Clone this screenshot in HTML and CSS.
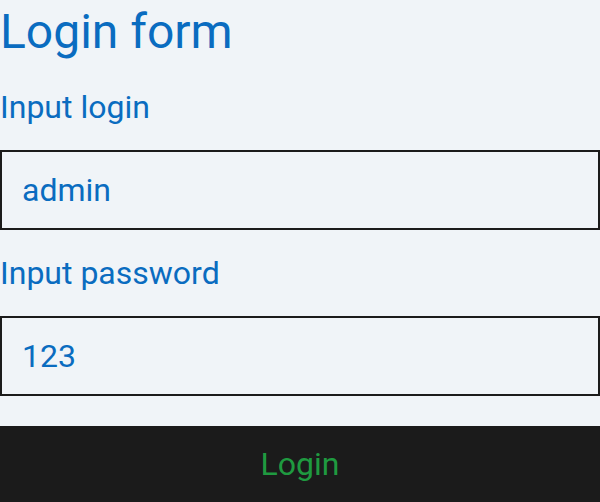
FILE: index.html
```html
<!DOCTYPE html>
<html>
<head>
<meta charset="utf-8">
<link rel="stylesheet" href="styles.css">
</head>
<body>
<form class="login">
  <h1 class="title">Login form</h1>
  <label class="label" for="login">Input login</label>
  <input class="field" id="login" type="text" value="admin">
  <label class="label" for="pass">Input password</label>
  <input class="field" id="pass" type="text" value="123">
  <button class="btn" type="button">Login</button>
</form>
</body>
</html>
```
FILE: styles.css
```css
html, body {
  margin: 0;
  padding: 0;
  background: #f0f4f8;
  font-family: Roboto, "Liberation Sans", sans-serif;
}
.login {
  display: flex;
  flex-direction: column;
  width: 600px;
}
.title {
  margin: 0;
  font-size: 48px;
  font-weight: 400;
  line-height: 64px;
  color: #0a6cc0;
}
.label {
  margin-top: 23px;
  font-size: 32px;
  line-height: 40px;
  color: #0a6cc0;
}
.field {
  margin-top: 23px;
  box-sizing: border-box;
  width: 600px;
  height: 80px;
  border: 2px solid #1b1b1b;
  background: #f0f4f8;
  padding: 0 20px;
  font-family: Roboto, sans-serif;
  font-size: 32px;
  color: #0a6cc0;
  outline: none;
}
.btn {
  margin-top: 30px;
  height: 76px;
  border: none;
  background: #1b1b1b;
  color: #1f9a40;
  font-family: Roboto, sans-serif;
  font-size: 32px;
  padding: 0;
}
```
